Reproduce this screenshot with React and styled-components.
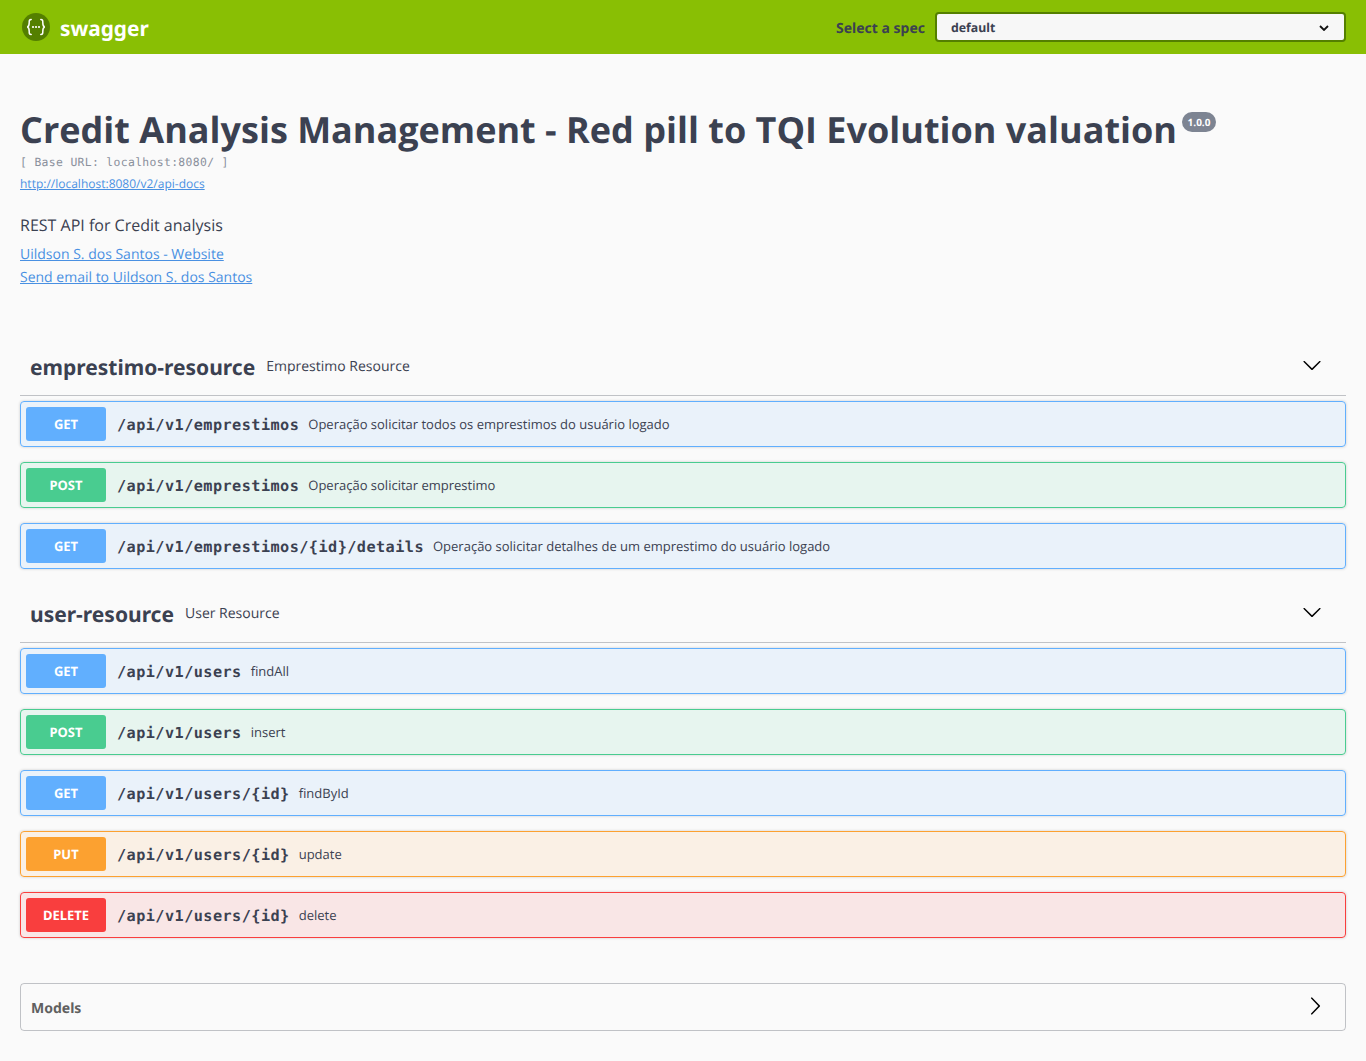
import React from "react";
import styled, { createGlobalStyle } from "styled-components";

const Global = createGlobalStyle`
  html, body { margin: 0; padding: 0; background: #fafafa; }
  body {
    font-family: "Open Sans", sans-serif;
    color: #3b4151;
    text-rendering: geometricPrecision;
  }
  * { box-sizing: border-box; }
`;

const Page = styled.div`
  min-height: 1061px;
  background: #fafafa;
`;

const Topbar = styled.header`
  height: 54px;
  background: #89bf04;
  padding: 0 20px 0 22px;
  display: flex;
  align-items: center;
  justify-content: space-between;
`;

const Brand = styled.div`
  display: flex;
  align-items: center;
  gap: 10px;
  color: #fff;
  font: 700 20.8px/30px "Noto Sans", sans-serif;
`;

const BrandName = styled.span`
  padding-top: 3px;
`;

const SpecPicker = styled.label`
  display: flex;
  align-items: center;
  gap: 10px;
  font: 700 14px/20px "Noto Sans", sans-serif;
  color: #3b4151;
`;

const SpecLabel = styled.span`
  padding-top: 3px;
`;

const SpecSelect = styled.div`
  width: 411px;
  height: 30px;
  padding: 1px 15px 0 14px;
  display: flex;
  align-items: center;
  justify-content: space-between;
  background: #f7f7f7;
  border: 2px solid #547f00;
  border-radius: 4px;
  font: 700 12.3px/20px "Noto Sans", sans-serif;
`;

const Container = styled.main`
  padding: 0 20px;
`;

const Info = styled.section`
  padding-top: 50px;
  height: 283px;
`;

const TitleRow = styled.div`
  display: flex;
  align-items: flex-start;
  gap: 5px;
`;

const Title = styled.h2`
  margin: 0;
  font: 700 36px/52px "Open Sans", sans-serif;
  color: #3b4151;
`;

const Version = styled.span`
  margin-top: 8px;
  height: 20px;
  width: 34px;
  border-radius: 10px;
  background: #7d8492;
  color: #fff;
  font: 700 10px/20px "Open Sans", sans-serif;
  text-align: center;
`;

const BaseUrl = styled.div`
  font: 400 11.4px/16px "DejaVu Sans Mono", monospace;
  letter-spacing: 0.34px;
  color: #8a909c;
  margin-top: -2px;
`;

const SpecLink = styled.a`
  display: block;
  margin-top: 4px;
  font: 400 12px/20px "Open Sans", sans-serif;
  color: #4990e2;
  text-decoration: underline;
`;

const Description = styled.p`
  margin: 20px 0 7px;
  font: 400 16px/22px "Open Sans", sans-serif;
`;

const Contact = styled.a`
  display: block;
  font: 400 14px/23px "Open Sans", sans-serif;
  color: #4990e2;
  text-decoration: underline;
`;

const TagHeader = styled.div`
  height: 59px;
  padding: 0 24px 0 10px;
  display: flex;
  align-items: center;
  gap: 10px;
  border-bottom: 1px solid rgba(59, 65, 81, 0.3);
  margin-bottom: 5px;
`;

const TagName = styled.h3`
  margin: 4px 0 0;
  font: 700 21px/30px "Noto Sans", sans-serif;
`;

const TagNote = styled.span`
  flex: 1;
  font: 400 14px/20px "Open Sans", sans-serif;
  margin-top: 1px;
  padding-left: 1px;
`;

const Chevron = styled.svg`
  width: 20px;
  height: 20px;
  fill: #000;
  display: block;
  margin-top: -2px;
`;

const SelectCaret = styled.svg`
  width: 10px;
  height: 6px;
  display: block;
  fill: none;
  stroke: #111;
  stroke-width: 1.8;
`;

const methods = {
  GET: { c: "#61affe", bg: "rgba(97,175,254,.1)" },
  POST: { c: "#49cc90", bg: "rgba(73,204,144,.1)" },
  PUT: { c: "#fca130", bg: "rgba(252,161,48,.1)" },
  DELETE: { c: "#f93e3e", bg: "rgba(249,62,62,.1)" },
};

const Op = styled.div`
  height: 46px;
  margin-bottom: 15px;
  padding: 5px;
  display: flex;
  align-items: center;
  border: 1px solid ${(p) => methods[p.$m].c};
  background: ${(p) => methods[p.$m].bg};
  border-radius: 4px;
  box-shadow: 0 0 3px rgba(0, 0, 0, 0.19);
`;

const Method = styled.span`
  width: 80px;
  height: 34px;
  border-radius: 3px;
  background: ${(p) => methods[p.$m].c};
  color: #fff;
  font: 700 13px/35px "Noto Sans", sans-serif;
  text-align: center;
  flex: none;
`;

const Path = styled.span`
  padding: 2px 9px 0 11px;
  font: 600 15.2px/20px "DejaVu Sans Mono", monospace;
  letter-spacing: 0.45px;
  color: #3b4151;
`;

const Summary = styled.span`
  font: 400 13px/20px "Open Sans", sans-serif;
  color: #3b4151;
`;

const Models = styled.section`
  margin-top: 45px;
  height: 48px;
  padding: 0 20px 0 10px;
  display: flex;
  align-items: center;
  justify-content: space-between;
  border: 1px solid rgba(59, 65, 81, 0.3);
  border-radius: 4px;
`;

const ModelsTitle = styled.h4`
  margin: 4px 0 0;
  font: 700 14px/20px "Noto Sans", sans-serif;
  color: #606060;
`;

const Logo = () => (
  <svg width="28" height="28" viewBox="0 0 28 28" aria-hidden="true">
    <circle cx="14" cy="14" r="14" fill="#547f00" />
    <g fill="none" stroke="#fff" strokeWidth="1.5" strokeLinecap="round">
      <path d="M9.200 6.500c-2.200 0-2 1.600-2 3.300 0 2.200-.5 3.900-2 4.200 1.500.3 2 2 2 4.200 0 1.700-.2 3.300 2 3.300" />
      <path d="M18.800 6.500c2.200 0 2 1.600 2 3.300 0 2.200.5 3.900 2 4.200-1.500.3-2 2-2 4.200 0 1.700.2 3.300-2 3.300" />
    </g>
    <g fill="#fff">
      <circle cx="11" cy="14" r="1.100" />
      <circle cx="14" cy="14" r="1.100" />
      <circle cx="17" cy="14" r="1.100" />
    </g>
  </svg>
);

const Down = () => (
  <Chevron viewBox="0 0 20 20">
    <path d="M17.418 6.109c.272-.268.709-.268.979 0s.271.701 0 .969l-7.908 7.83c-.27.268-.707.268-.979 0l-7.908-7.83c-.27-.268-.27-.701 0-.969.271-.268.709-.268.979 0L10 13.250l7.418-7.141z" />
  </Chevron>
);

const Right = () => (
  <Chevron viewBox="0 0 20 20">
    <path d="M13.250 10L6.109 2.580c-.268-.27-.268-.707 0-.979.268-.27.701-.27.969 0l7.830 7.908c.268.271.268.709 0 .979l-7.830 7.908c-.268.271-.701.27-.969 0-.268-.269-.268-.707 0-.979L13.250 10z" />
  </Chevron>
);

const tags = [
  {
    name: "emprestimo-resource",
    note: "Emprestimo Resource",
    ops: [
      ["GET", "/api/v1/emprestimos", "Operação solicitar todos os emprestimos do usuário logado"],
      ["POST", "/api/v1/emprestimos", "Operação solicitar emprestimo"],
      ["GET", "/api/v1/emprestimos/{id}/details", "Operação solicitar detalhes de um emprestimo do usuário logado"],
    ],
  },
  {
    name: "user-resource",
    note: "User Resource",
    ops: [
      ["GET", "/api/v1/users", "findAll"],
      ["POST", "/api/v1/users", "insert"],
      ["GET", "/api/v1/users/{id}", "findById"],
      ["PUT", "/api/v1/users/{id}", "update"],
      ["DELETE", "/api/v1/users/{id}", "delete"],
    ],
  },
];

export default function App() {
  return (
    <Page>
      <Global />
      <Topbar>
        <Brand>
          <Logo />
          <BrandName>swagger</BrandName>
        </Brand>
        <SpecPicker>
          <SpecLabel>Select a spec</SpecLabel>
          <SpecSelect>
            <span>default</span>
            <SelectCaret viewBox="0 0 10 6">
              <path d="M1 1l4 4 4-4" />
            </SelectCaret>
          </SpecSelect>
        </SpecPicker>
      </Topbar>
      <Container>
        <Info>
          <TitleRow>
            <Title>Credit Analysis Management - Red pill to TQI Evolution valuation</Title>
            <Version>1.0.0</Version>
          </TitleRow>
          <BaseUrl>[ Base URL: localhost:8080/ ]</BaseUrl>
          <SpecLink>http://localhost:8080/v2/api-docs</SpecLink>
          <Description>REST API for Credit analysis</Description>
          <Contact>Uildson S. dos Santos - Website</Contact>
          <Contact>Send email to Uildson S. dos Santos</Contact>
        </Info>
        {tags.map((t) => (
          <section key={t.name}>
            <TagHeader>
              <TagName>{t.name}</TagName>
              <TagNote>{t.note}</TagNote>
              <Down />
            </TagHeader>
            {t.ops.map(([m, p, s]) => (
              <Op key={m + p} $m={m}>
                <Method $m={m}>{m}</Method>
                <Path>{p}</Path>
                <Summary>{s}</Summary>
              </Op>
            ))}
          </section>
        ))}
        <Models>
          <ModelsTitle>Models</ModelsTitle>
          <Right />
        </Models>
      </Container>
    </Page>
  );
}
